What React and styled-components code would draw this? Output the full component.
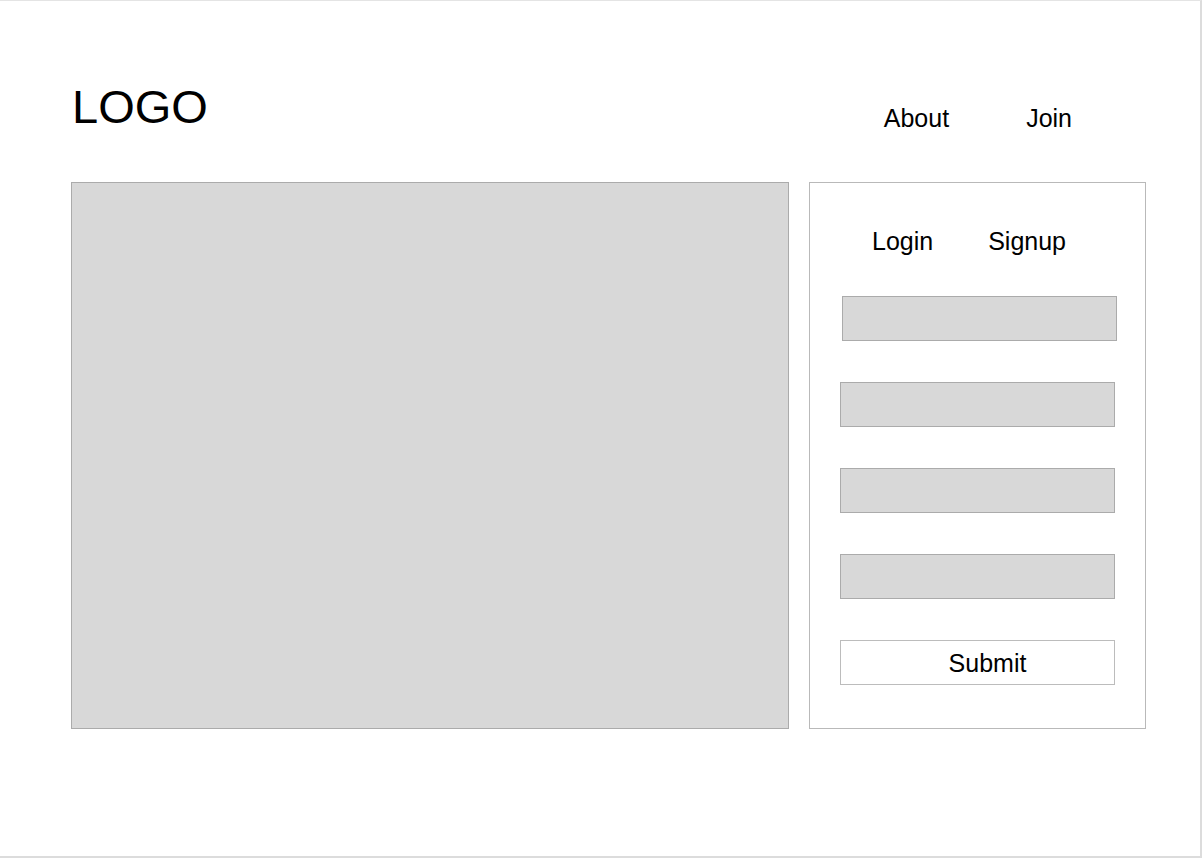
import React from 'react';
import styled, { createGlobalStyle } from 'styled-components';

const GlobalStyle = createGlobalStyle`
  body {
    margin: 0;
    background: #fff;
    font-family: "Liberation Sans", Arial, sans-serif;
    color: #000;
  }
`;

const Frame = styled.div`
  box-sizing: border-box;
  width: 1202px;
  height: 858px;
  border-top: 1px solid #e4e4e4;
  border-right: 2px solid #dcdcdc;
  border-bottom: 2px solid #dcdcdc;
  padding-left: 71px;
`;

const Page = styled.div`
  width: 1075px;
`;

const Header = styled.header`
  display: flex;
  align-items: flex-start;
  height: 181px;
`;

const Logo = styled.div`
  margin-top: 82px;
  margin-left: 1px;
  font-size: 47px;
  line-height: 1;
`;

const Nav = styled.nav`
  display: flex;
  gap: 77px;
  margin-top: 105px;
  margin-left: auto;
  margin-right: 74px;
`;

const NavLink = styled.a`
  font-size: 25px;
  line-height: 1;
  color: #000;
  text-decoration: none;
`;

const Main = styled.main`
  display: flex;
  gap: 20px;
`;

const Hero = styled.div`
  box-sizing: border-box;
  width: 718px;
  height: 547px;
  background: #d8d8d8;
  border: 1px solid #ababab;
`;

const Panel = styled.section`
  box-sizing: border-box;
  width: 337px;
  height: 547px;
  border: 1px solid #b9b9b9;
  padding: 46px 0 0 30px;
  display: flex;
  flex-direction: column;
  align-items: flex-start;
`;

const Tabs = styled.div`
  display: flex;
  gap: 55px;
  margin-left: 32px;
  margin-bottom: 42px;
`;

const Tab = styled.span`
  font-size: 25px;
  line-height: 1;
`;

const Field = styled.div`
  box-sizing: border-box;
  width: 275px;
  height: 45px;
  margin-left: ${p => p.$shift || 0}px;
  margin-bottom: 41px;
  background: #d8d8d8;
  border: 1px solid #ababab;
`;

const Submit = styled.button`
  box-sizing: border-box;
  width: 275px;
  height: 45px;
  padding: 2px 0 0 20px;
  background: #fff;
  border: 1px solid #bcbcbc;
  border-radius: 0;
  font-family: "Liberation Sans", Arial, sans-serif;
  font-size: 25px;
  line-height: 1;
  color: #000;
  text-align: center;
`;

export default function App() {
  return (
    <>
      <GlobalStyle />
      <Frame>
        <Page>
          <Header>
            <Logo>LOGO</Logo>
            <Nav>
              <NavLink href="#">About</NavLink>
              <NavLink href="#">Join</NavLink>
            </Nav>
          </Header>
          <Main>
            <Hero />
            <Panel>
              <Tabs>
                <Tab>Login</Tab>
                <Tab>Signup</Tab>
              </Tabs>
              <Field $shift={2} />
              <Field />
              <Field />
              <Field />
              <Submit>Submit</Submit>
            </Panel>
          </Main>
        </Page>
      </Frame>
    </>
  );
}
